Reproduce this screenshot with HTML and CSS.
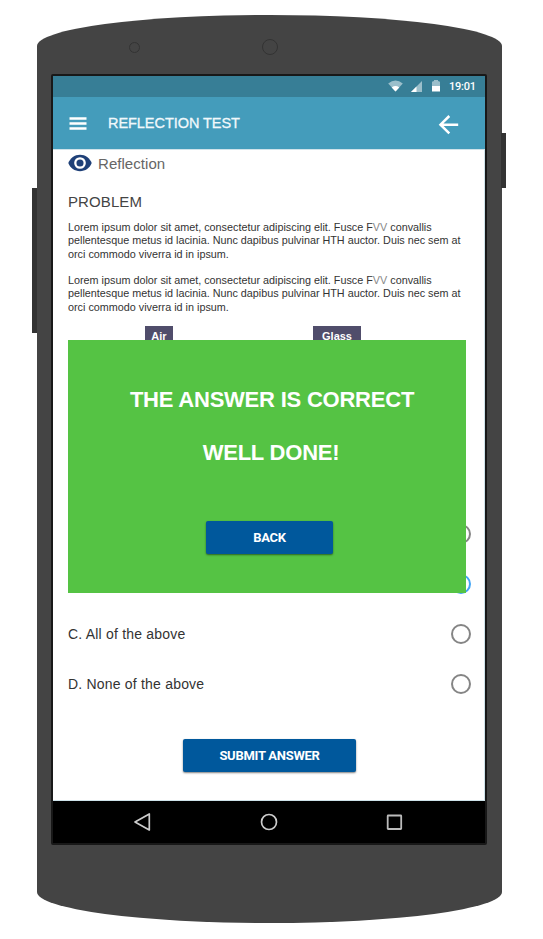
FILE: index.html
```
<!DOCTYPE html>
<html lang="en">
<head>
<meta charset="utf-8">
<title>Reflection test</title>
<link rel="stylesheet" href="styles.css">
</head>
<body>
<div class="phone">
  <span class="side-button volume"></span>
  <span class="side-button power"></span>
  <div class="phone-top">
    <span class="sensor"></span>
    <span class="speaker"></span>
  </div>
  <div class="screen">
    <div class="status-bar">
      <svg class="wifi" width="15" height="12" viewBox="0 0 15 12"><path d="M.2 3.4Q7.500-2.600 14.800 3.400L7.500 11.600Z" fill="#fff" opacity=".5"/><path d="M3.700 7.400Q7.500 4.800 11.300 7.400L7.500 11.600Z" fill="#fff"/></svg>
      <svg class="signal" width="11" height="11" viewBox="0 0 11 11"><path d="M11 0V11H0Z" fill="#fff" opacity=".5"/><path d="M5.500 5.500V11H0Z" fill="#fff"/></svg>
      <svg class="battery" width="8" height="12" viewBox="0 0 8 12"><path d="M0 6V1.800L2 1V0H6V1L8 1.800V6Z" fill="#fff" opacity=".5"/><path d="M0 6H8V11.500H0Z" fill="#fff"/></svg>
      <span class="time">19:01</span>
    </div>
    <header class="app-bar">
      <svg class="menu-icon" width="18" height="13" viewBox="0 0 18 13"><path d="M.5 1.500H17.500M.5 6.500H17.500M.5 11.500H17.500" stroke="#fff" stroke-width="2.500"/></svg>
      <h1 class="title">REFLECTION TEST</h1>
      <svg class="back-icon" width="22" height="20" viewBox="0 0 22 20"><path d="M12.300 1L3.500 9.700L12.300 18.400M3.500 9.700H21.200" fill="none" stroke="#fff" stroke-width="2.500"/></svg>
    </header>
    <main class="content">
      <div class="category">
        <svg class="eye" width="24" height="18" viewBox="0 0 24 18"><path d="M.3 9C2.200 4 6.600.7 12 .7S21.800 4 23.700 9C21.800 14 17.400 17.200 12 17.200S2.200 14 .3 9Z" fill="#1f4078"/><circle cx="12" cy="9" r="4.700" fill="#1f4078" stroke="#fff" stroke-width="2.300"/></svg>
        <span class="category-name">Reflection</span>
      </div>
      <h2 class="problem">PROBLEM</h2>
      <p class="text">Lorem ipsum dolor sit amet, consectetur adipiscing elit. Fusce F<span class="thin">VV</span> convallis<br>pellentesque metus id lacinia. Nunc dapibus pulvinar HTH auctor. Duis nec sem at<br>orci commodo viverra id in ipsum.</p>
      <p class="text">Lorem ipsum dolor sit amet, consectetur adipiscing elit. Fusce F<span class="thin">VV</span> convallis<br>pellentesque metus id lacinia. Nunc dapibus pulvinar HTH auctor. Duis nec sem at<br>orci commodo viverra id in ipsum.</p>
      <div class="figure">
        <span class="label air">Air</span>
        <span class="label glass">Glass</span>
      </div>
      <div class="options">
        <div class="option"><span class="radio"></span></div>
        <div class="option"><span class="radio selected"></span></div>
        <div class="option"><span class="option-text">C. All of the above</span><span class="radio"></span></div>
        <div class="option"><span class="option-text">D. None of the above</span><span class="radio"></span></div>
      </div>
      <button class="button submit">SUBMIT ANSWER</button>
      <section class="dialog">
        <p class="message">THE ANSWER IS CORRECT</p>
        <p class="message well-done">WELL DONE!</p>
        <button class="button back">BACK</button>
      </section>
    </main>
    <nav class="nav-bar">
      <svg width="18" height="20" viewBox="0 0 18 20"><path d="M15.300 2V18L1 10Z" fill="none" stroke="#ccc" stroke-width="1.700" stroke-linejoin="round"/></svg>
      <svg width="18" height="20" viewBox="0 0 18 20"><circle cx="9" cy="10" r="7.500" fill="none" stroke="#ccc" stroke-width="1.700"/></svg>
      <svg width="18" height="20" viewBox="0 0 18 20"><rect x="2.700" y="3.500" width="13.500" height="13.500" rx=".5" fill="none" stroke="#bbb" stroke-width="1.800"/></svg>
    </nav>
  </div>
</div>
</body>
</html>
```
FILE: styles.css
```
* { box-sizing: border-box; }
body {
  margin: 0;
  width: 543px;
  height: 939px;
  padding: 15px 0 0 37px;
  background: #fff;
  overflow: hidden;
  font-family: "Liberation Sans", Arial, sans-serif;
}
h1, h2, p { margin: 0; font-weight: 400; }
svg { display: block; flex: none; }
.phone {
  position: relative;
  width: 464.5px;
  height: 908px;
  background: #444;
  border-radius: 232px / 31px;
}
.side-button { position: absolute; width: 5px; background: #333; }
.volume { left: -5px; top: 173px; height: 145px; }
.power { right: -4px; top: 118px; height: 55px; }
.phone-top { height: 59px; display: flex; align-items: center; padding: 5px 0 0 92px; }
.sensor, .speaker { border: 1px solid #333; border-radius: 50%; }
.sensor { width: 11px; height: 11px; }
.speaker { width: 16px; height: 16px; margin-left: 122px; }
.screen {
  width: 436px;
  height: 771px;
  margin-left: 14px;
  border: 2px solid #181818;
  border-radius: 2px;
  background: #fff;
}
.status-bar {
  height: 21px;
  background: #377e96;
  display: flex;
  align-items: center;
  justify-content: flex-end;
  padding-right: 9px;
  color: #fff;
}
.wifi { margin-top: -1px; }
.signal { margin-left: 8px; margin-top: -1px; }
.battery { margin-left: 10px; margin-top: -2px; }
.time { margin-left: 9px; width: 27px; white-space: nowrap; font: 500 11px Roboto, sans-serif; letter-spacing: -.2px; }
.app-bar {
  height: 52px;
  background: #449cbb;
  display: flex;
  align-items: center;
  padding: 0 26px 0 16px;
}
.title { flex: 1; margin-left: 21px; color: #f1f8fb; font-size: 14.5px; line-height: 20px; letter-spacing: -.05px; -webkit-text-stroke: .3px #f1f8fb; }
.back-icon { margin-top: 3px; }
.content {
  position: relative;
  height: 652px;
  padding: 2px 15px 0;
  border: solid #cfe3ea;
  border-width: 1px 1px 1px 0;
}
.category { display: flex; align-items: center; height: 22px; }
.category-name { margin-left: 6px; font-size: 15px; letter-spacing: .05px; color: #666; }
.problem { margin: 19px 0 10px; font-size: 15px; line-height: 18px; letter-spacing: .1px; color: #444; }
.text { height: 40px; margin-bottom: 13px; font-size: 10.8px; line-height: 13.4px; color: #333; white-space: nowrap; }
.thin { color: #888; }
.figure { height: 183px; margin-top: -1px; display: flex; align-items: flex-start; padding-left: 77px; }
.label {
  height: 23px;
  background: #504d6b;
  color: #fff;
  font-size: 11px;
  font-weight: 700;
  line-height: 21px;
  text-align: center;
}
.air { width: 28px; }
.glass { width: 48px; margin-left: 140px; }
.option { height: 50px; display: flex; align-items: center; justify-content: flex-end; }
.option-text { flex: 1; font-size: 14px; letter-spacing: .2px; color: #333; }
.radio { width: 20px; height: 20px; margin-right: -2px; border: 2px solid #858585; border-radius: 50%; }
.radio.selected { border-color: #42a5f5; }
.button {
  display: block;
  height: 33px;
  padding: 0;
  border: 0;
  border-radius: 2px;
  background: #00589c;
  color: #fff;
  font: 700 13px Roboto, sans-serif;
  letter-spacing: -.27px;
  box-shadow: 0 1px 2px rgba(0, 0, 0, .5);
}
.submit { width: 173px; margin: 30px 0 0 115px; }
.dialog {
  position: absolute;
  left: 15px;
  top: 190px;
  width: 398px;
  height: 253px;
  padding-top: 47px;
  background: #55c344;
}
.message { padding-left: 10px; text-align: center; color: #fff; font-size: 22px; letter-spacing: -.22px; font-weight: 700; line-height: 26px; white-space: nowrap; }
.well-done { margin-top: 27px; padding-left: 8px; }
.back { width: 127px; margin: 55px 0 0 138px; }
.nav-bar {
  height: 42px;
  padding: 0 82px 0 81px;
  display: flex;
  align-items: center;
  justify-content: space-between;
  background: #000;
}
```
